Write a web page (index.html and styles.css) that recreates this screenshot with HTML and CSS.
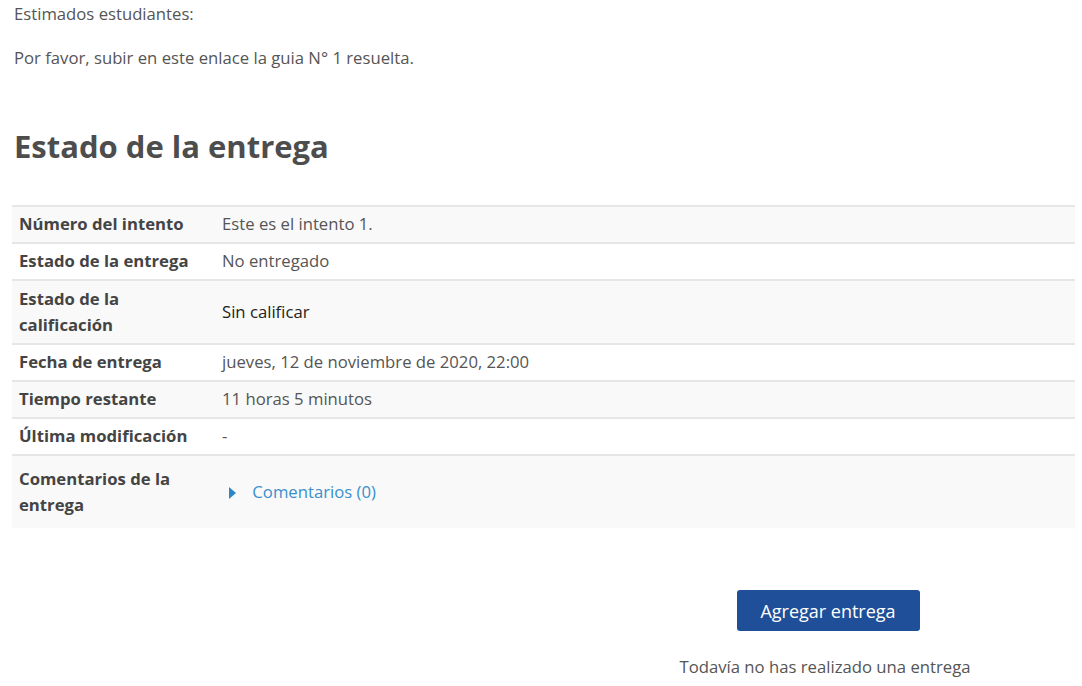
FILE: index.html
```html
<!DOCTYPE html>
<html lang="es">
<head>
  <meta charset="UTF-8" />
  <meta name="viewport" content="width=device-width, initial-scale=1.0" />
  <title>Estado de la entrega</title>
  <link rel="stylesheet" href="styles.css">
</head>
<body>
  <div class="page">
    <div class="intro">
      <p>Estimados estudiantes:</p>
      <p>Por favor, subir en este enlace la guia N° 1 resuelta.</p>
    </div>

    <h2 class="section-title">Estado de la entrega</h2>

    <table class="status-table">
      <tr>
        <th>Número del intento</th>
        <td>Este es el intento 1.</td>
      </tr>
      <tr>
        <th>Estado de la entrega</th>
        <td>No entregado</td>
      </tr>
      <tr class="tall">
        <th>Estado de la calificación</th>
        <td class="dark">Sin calificar</td>
      </tr>
      <tr>
        <th>Fecha de entrega</th>
        <td>jueves, 12 de noviembre de 2020, 22:00</td>
      </tr>
      <tr>
        <th>Tiempo restante</th>
        <td>11 horas 5 minutos</td>
      </tr>
      <tr>
        <th>Última modificación</th>
        <td>-</td>
      </tr>
      <tr class="last">
        <th>Comentarios de la entrega</th>
        <td>
          <a href="#" class="comments-link">
            <svg class="caret" width="8" height="12" viewBox="0 0 8 12"><path d="M1 0 L8 6 L1 12 Z" fill="#2f86c6"/></svg>
            Comentarios (0)
          </a>
        </td>
      </tr>
    </table>

    <div class="submit-box">
      <button type="button" class="btn-primary">Agregar entrega</button>
      <p class="hint">Todavía no has realizado una entrega</p>
    </div>
  </div>
</body>
</html>
```

FILE: styles.css
```css
body {
  margin: 0;
  background: #fff;
  font-family: 'Open Sans', 'Liberation Sans', sans-serif;
  font-size: 16.7px;
  color: #555;
}

.page {
  padding: 2px 7px 0 12px;
}

.intro {
  padding-left: 2px;
}

.intro p {
  margin: 0;
  line-height: 24px;
}

.intro p + p {
  margin-top: 20px;
}

.section-title {
  margin: 54px 0 0 2px;
  font-size: 31px;
  font-weight: 700;
  color: #4d4d4d;
  line-height: 44px;
}

.status-table {
  width: 1063px;
  margin-top: 37px;
  border-collapse: collapse;
}

.status-table tr {
  border-top: 2px solid #e6e6e6;
}

.status-table tr:nth-child(odd) {
  background: #f9f9f9;
}

.status-table th,
.status-table td {
  padding: 4px 7px 5px;
  line-height: 26px;
  text-align: left;
  vertical-align: middle;
}

.status-table th {
  width: 189px;
  font-weight: 700;
  color: #444;
}

.status-table td.dark {
  color: #222;
}

.status-table tr.tall th,
.status-table tr.tall td {
  padding-top: 5px;
}

.status-table tr.last th,
.status-table tr.last td {
  padding-top: 10px;
  padding-bottom: 10px;
}

.comments-link {
  color: #3a8fcc;
  text-decoration: none;
}

.caret {
  margin: 0 12px 0 6px;
  vertical-align: -1px;
}

.submit-box {
  width: 400px;
  margin: 62px 47px 0 auto;
  display: flex;
  flex-direction: column;
  align-items: center;
}

.btn-primary {
  width: 183px;
  height: 41px;
  background: #1f4f98;
  color: #fff;
  border: none;
  border-radius: 3px;
  font-family: 'Open Sans', 'Liberation Sans', sans-serif;
  font-size: 18px;
}

.hint {
  margin: 24px 0 0;
  padding-right: 6px;
  font-size: 16.7px;
  color: #555;
}
```
